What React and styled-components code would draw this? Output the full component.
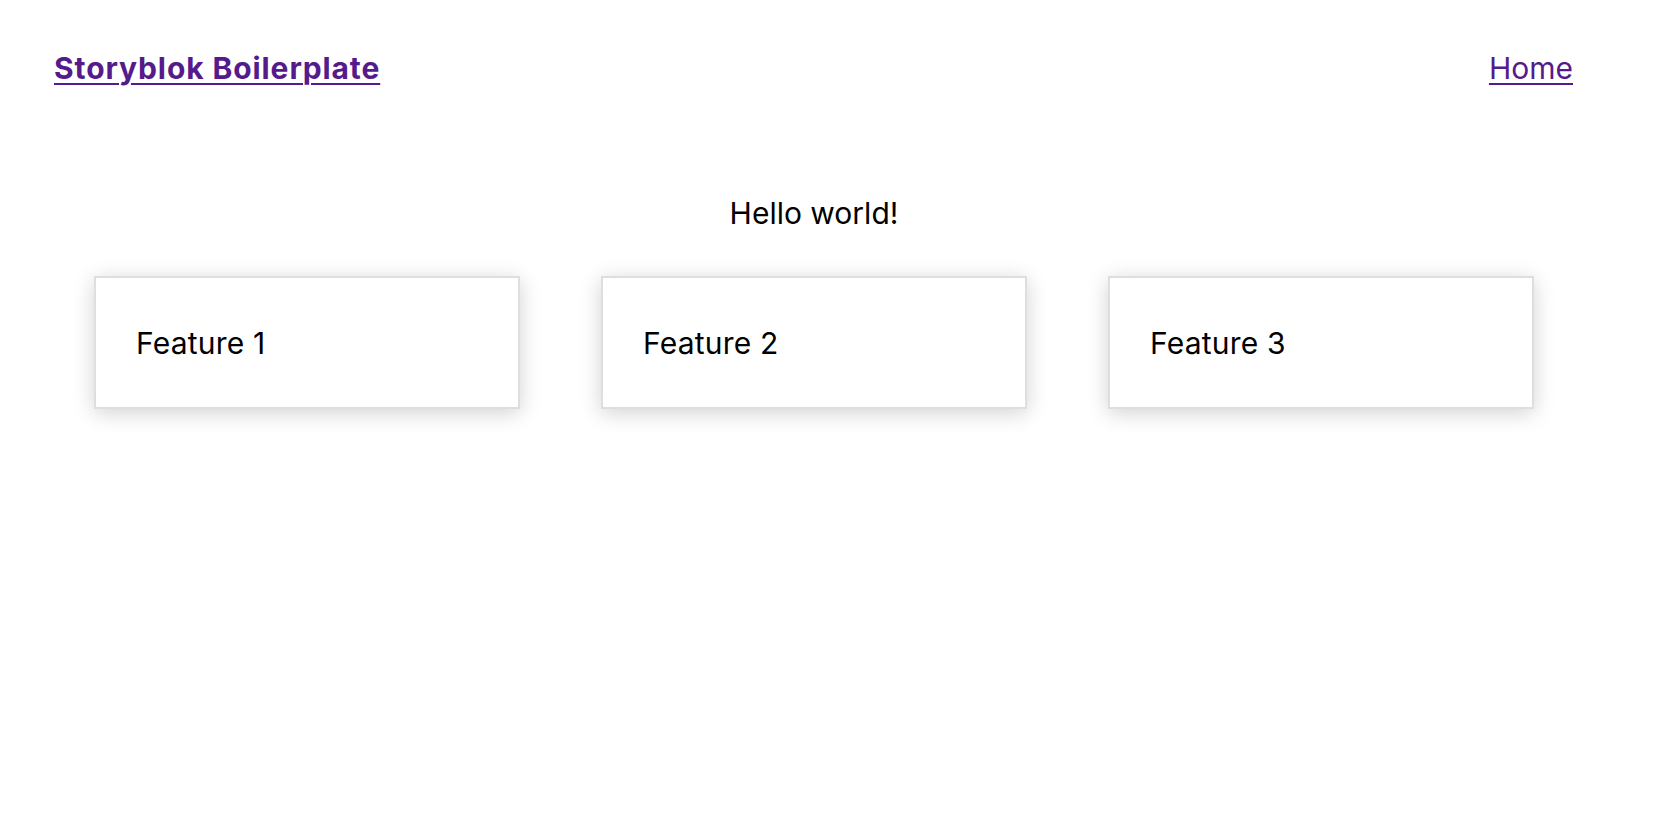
import React from "react";
import styled, { createGlobalStyle } from "styled-components";

const GlobalStyle = createGlobalStyle`
  body {
    margin: 0;
    background: #fff;
    color: #000;
    font-family: Inter, "Noto Sans", sans-serif;
  }
`;

const Page = styled.div`
  width: 1628px;
`;

const Header = styled.header`
  display: flex;
  justify-content: space-between;
  align-items: flex-start;
  padding: 50px 55px 0 54px;
`;

const NavLink = styled.a`
  color: #551a8b;
  font-size: 30px;
  font-weight: ${({ $bold }) => ($bold ? 700 : 400)};
  letter-spacing: ${({ $bold }) => ($bold ? "0.9px" : "0")};
  text-decoration: underline;
  text-decoration-thickness: 2px;
  text-underline-offset: 4px;
`;

const Greeting = styled.p`
  margin: 109px 0 0;
  font-size: 30px;
  text-align: center;
`;

const FeatureGrid = styled.div`
  display: grid;
  grid-template-columns: repeat(3, 1fr);
  gap: 81px;
  padding: 45px 94px 40px;
`;

const FeatureCard = styled.div`
  border: 2px solid #dedede;
  box-shadow: 0 4px 20px rgba(0, 0, 0, 0.18);
  padding: 47px 40px 46px;
  background: #fff;
`;

const FeatureTitle = styled.div`
  font-size: 30px;
  letter-spacing: 0.2px;
`;

const features = ["Feature 1", "Feature 2", "Feature 3"];

export default function App() {
  return (
    <Page>
      <GlobalStyle />
      <Header>
        <NavLink href="#" $bold>
          Storyblok Boilerplate
        </NavLink>
        <NavLink href="#">Home</NavLink>
      </Header>
      <Greeting>Hello world!</Greeting>
      <FeatureGrid>
        {features.map((name) => (
          <FeatureCard key={name}>
            <FeatureTitle>{name}</FeatureTitle>
          </FeatureCard>
        ))}
      </FeatureGrid>
    </Page>
  );
}
